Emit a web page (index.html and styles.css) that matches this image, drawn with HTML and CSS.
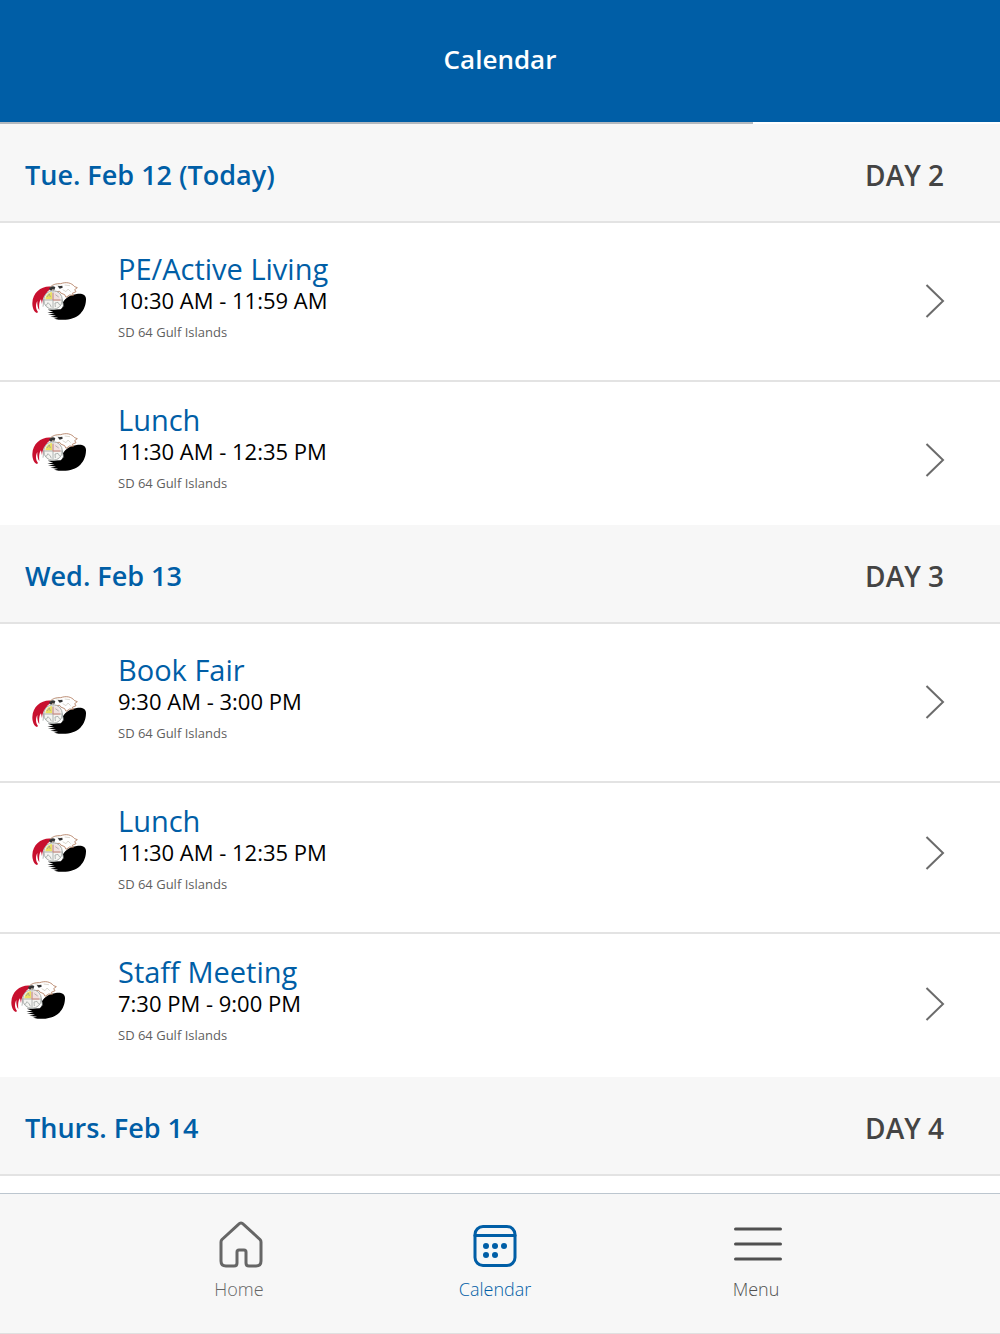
FILE: index.html
```html
<!DOCTYPE html>
<html lang="en">
<head>
<meta charset="utf-8">
<meta name="viewport" content="width=device-width, initial-scale=1">
<title>Calendar</title>
<link rel="stylesheet" href="styles.css">
</head>
<body>
<svg class="sprite" aria-hidden="true">
  <symbol id="eagle" viewBox="36 38 162 112">
    <path fill="#c8102e" d="M93 51C66 48 38 67 37 101C37 115 42 127 51 130L54 127C46 116 47 103 52 94C51 107 54 117 58 121C56 104 59 94 63 89L66 104C67 90 70 83 75 78L82 66C88 61 92 57 93 51Z"/>
    <path fill="#000" d="M198 88C198 75 185 70 170 73C152 76 136 84 129 98C131 108 128 114 122 119L83 120L100 126L82 128L104 132L84 134L108 138L91 141L114 144L102 147C134 155 163 149 181 132C193 120 198 104 198 88Z"/>
    <path fill="#fff" stroke="#b07a5c" stroke-width="2.500" d="M90 53C98 44 110 41 122 42C139 36 154 39 164 51L172 54L164 60L168 66L157 71L160 77L149 76L138 83L134 75L122 70L119 65L103 66L98 60Z"/>
    <path fill="none" stroke="#c9c4b8" stroke-width="2" d="M128 60L138 66L144 58L152 66M106 45L118 47M134 46L150 48"/>
    <path fill="#333" d="M87 58C91 49 101 48 106 53L103 61L97 58L94 65ZM113 50L127 48L128 54L119 57Z"/>
    <circle cx="99" cy="91" r="28" fill="#f4f4f1" stroke="#a5aaa8" stroke-width="3"/>
    <path fill="#e9e066" d="M96 67V89H76C77 77 84 69 96 67Z"/>
    <path fill="#f0dfdf" d="M102 67V89H122C121 77 113 69 102 67Z"/>
    <path fill="none" stroke="#8e9694" stroke-width="2" d="M99 65V117M73 91H125M78 108L84 99L91 106L94 113M106 112L105 100L114 98L119 106M81 82L88 73L91 82M106 75L116 82M72 89L69 111M126 90L131 111"/>
    <path fill="none" stroke="#d98c80" stroke-width="3" d="M99 70V91H121"/>
  </symbol>
  <symbol id="chevron" viewBox="0 0 20 36">
    <path fill="none" stroke="#6b6b6b" stroke-width="2" d="M1.500 2L18 18L1.500 34"/>
  </symbol>
</svg>

<header class="topbar"><h1 class="topbar-title">Calendar</h1></header>
<div class="progress"><div class="progress-fill"></div></div>

<main class="agenda">
  <section>
    <header class="day"><h2 class="day-date">Tue. Feb 12 (Today)</h2><span class="day-number">DAY 2</span></header>
    <ul class="events">
      <li><a class="event" href="#pe">
        <svg class="logo"><use href="#eagle"/></svg>
        <span class="details"><span class="title">PE/Active Living</span><span class="time">10:30 AM - 11:59 AM</span><span class="school">SD 64 Gulf Islands</span></span>
        <svg class="chevron"><use href="#chevron"/></svg>
      </a></li>
      <li><a class="event event-chevron-low" href="#lunch-12">
        <svg class="logo"><use href="#eagle"/></svg>
        <span class="details"><span class="title">Lunch</span><span class="time">11:30 AM - 12:35 PM</span><span class="school">SD 64 Gulf Islands</span></span>
        <svg class="chevron"><use href="#chevron"/></svg>
      </a></li>
    </ul>
  </section>
  <section>
    <header class="day"><h2 class="day-date">Wed. Feb 13</h2><span class="day-number">DAY 3</span></header>
    <ul class="events">
      <li><a class="event event-logo-low" href="#book-fair">
        <svg class="logo"><use href="#eagle"/></svg>
        <span class="details"><span class="title">Book Fair</span><span class="time">9:30 AM - 3:00 PM</span><span class="school">SD 64 Gulf Islands</span></span>
        <svg class="chevron"><use href="#chevron"/></svg>
      </a></li>
      <li><a class="event" href="#lunch-13">
        <svg class="logo"><use href="#eagle"/></svg>
        <span class="details"><span class="title">Lunch</span><span class="time">11:30 AM - 12:35 PM</span><span class="school">SD 64 Gulf Islands</span></span>
        <svg class="chevron"><use href="#chevron"/></svg>
      </a></li>
      <li><a class="event event-logo-start" href="#staff-meeting">
        <svg class="logo"><use href="#eagle"/></svg>
        <span class="details"><span class="title">Staff Meeting</span><span class="time">7:30 PM - 9:00 PM</span><span class="school">SD 64 Gulf Islands</span></span>
        <svg class="chevron"><use href="#chevron"/></svg>
      </a></li>
    </ul>
  </section>
  <section>
    <header class="day"><h2 class="day-date">Thurs. Feb 14</h2><span class="day-number">DAY 4</span></header>
  </section>
</main>

<nav class="tabs" aria-label="Main">
  <a class="tab tab-inset" href="#home">
    <svg class="tab-icon" viewBox="0 0 48 48"><path d="M21.5 4.3Q24 1.700 26.500 4.300L43 19.500Q44 20.500 44 22V41Q44 46 39 46H32Q29 46 29 43V32Q29 30 27 30H22Q20 30 20 32V43Q20 46 17 46H9Q4 46 4 41V22Q4 20.500 5 19.500Z"/></svg>
    <span>Home</span>
  </a>
  <a class="tab tab-active" href="#calendar" aria-current="page">
    <svg class="tab-icon" viewBox="0 0 48 48"><rect x="4" y="6.500" width="40" height="39" rx="8"/><path d="M4 15.500H44"/><g class="dots"><circle cx="15" cy="26" r="3"/><circle cx="24" cy="26" r="3"/><circle cx="33" cy="26" r="3"/><circle cx="15" cy="35" r="3"/><circle cx="24" cy="35" r="3"/></g></svg>
    <span>Calendar</span>
  </a>
  <a class="tab tab-inset tab-menu" href="#menu">
    <svg class="tab-icon" viewBox="0 0 48 48"><path d="M1.500 9H46.500M1.500 24H46.500M1.500 39H46.500"/></svg>
    <span>Menu</span>
  </a>
</nav>
</body>
</html>
```

FILE: styles.css
```css
* { box-sizing: border-box; }

body {
  margin: 0;
  min-height: 100vh;
  display: flex;
  flex-direction: column;
  background: #fff;
  color: #000;
  font-family: "Open Sans", "Noto Sans", sans-serif;
}

h1, h2, ul { margin: 0; padding: 0; }
a { color: inherit; text-decoration: none; }
svg { display: block; flex: none; }

.sprite { position: absolute; width: 0; height: 0; }

.topbar {
  padding: 39px 24px 43px;
  background: #005ea6;
  text-align: center;
}

.topbar-title {
  color: #fff;
  font-size: 26px;
  line-height: 40px;
  font-weight: 600;
}

.progress { height: 2px; background: #fff; }
.progress-fill { width: 75.3%; height: 2px; background: #b3b9bf; }

.agenda { padding-bottom: 17px; }

.day {
  display: flex;
  justify-content: space-between;
  align-items: center;
  padding: 31px 56px 26px 25px;
  border-bottom: 2px solid #e3e3e3;
  background: #f7f7f7;
  font-size: 28px;
  line-height: 40px;
}

.day-date { color: #005ea6; font-size: 27px; font-weight: 600; }
.day-number { color: #444; font-weight: 600; }

.events { list-style: none; }

.event {
  display: flex;
  align-items: center;
  gap: 32px;
  padding: 21px 55px 30px 32px;
  border-bottom: 2px solid #e3e3e3;
}

.events li:first-child .event { padding-top: 29px; }
.events li:last-child .event { padding-bottom: 24px; border-bottom: 0; }

.logo { width: 54px; height: 40px; }
.chevron { width: 20px; height: 36px; }
.event-logo-low .logo { margin-top: 26px; }
.event-logo-start .logo { margin: 0 21px 8px -21px; }
.event-chevron-low .chevron { margin-top: 16px; }

.details { display: flex; flex: 1; flex-direction: column; }
.title { color: #005ea6; font-size: 29px; line-height: 34px; }
.time { font-size: 22px; line-height: 28px; }
.school { color: #5f5f5f; font-size: 13px; line-height: 36px; }

.tabs {
  display: grid;
  grid-template-columns: 252px 260px 262px;
  justify-content: center;
  margin-top: auto;
  padding: 26px 0 30px;
  border-top: 1px solid #bcc6cf;
  border-bottom: 1px solid #e0e0e0;
  background: #f7f7f7;
}

.tab {
  display: flex;
  flex-direction: column;
  align-items: center;
  gap: 7px;
  color: #666;
  font-size: 18px;
  line-height: 28px;
  font-weight: 300;
}

.tab-active { color: #005ea6; }
.tab-menu { color: #505050; }
.tab-inset .tab-icon { margin-left: 4px; }

.tab-icon {
  width: 48px;
  height: 48px;
  fill: none;
  stroke: currentColor;
  stroke-width: 3;
  stroke-linecap: round;
  stroke-linejoin: round;
}

.dots { fill: currentColor; stroke: none; }
```
